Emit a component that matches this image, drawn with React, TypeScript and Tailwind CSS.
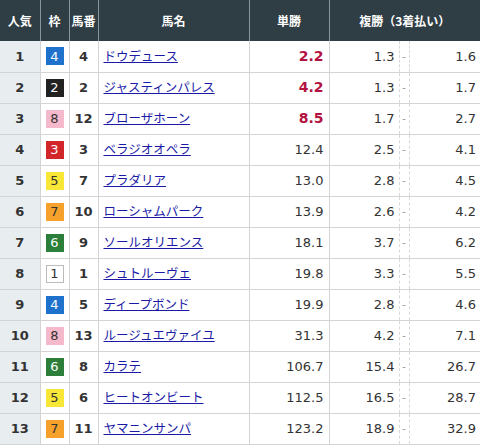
import React from 'react';

type Row = {
  rank: number;
  waku: number;
  num: number;
  name: string;
  win: string;
  placeLo: string;
  placeHi: string;
};

const rows: Row[] = [
  { rank: 1, waku: 4, num: 4, name: 'ドウデュース', win: '2.2', placeLo: '1.3', placeHi: '1.6' },
  { rank: 2, waku: 2, num: 2, name: 'ジャスティンパレス', win: '4.2', placeLo: '1.3', placeHi: '1.7' },
  { rank: 3, waku: 8, num: 12, name: 'ブローザホーン', win: '8.5', placeLo: '1.7', placeHi: '2.7' },
  { rank: 4, waku: 3, num: 3, name: 'ベラジオオペラ', win: '12.4', placeLo: '2.5', placeHi: '4.1' },
  { rank: 5, waku: 5, num: 7, name: 'プラダリア', win: '13.0', placeLo: '2.8', placeHi: '4.5' },
  { rank: 6, waku: 7, num: 10, name: 'ローシャムパーク', win: '13.9', placeLo: '2.6', placeHi: '4.2' },
  { rank: 7, waku: 6, num: 9, name: 'ソールオリエンス', win: '18.1', placeLo: '3.7', placeHi: '6.2' },
  { rank: 8, waku: 1, num: 1, name: 'シュトルーヴェ', win: '19.8', placeLo: '3.3', placeHi: '5.5' },
  { rank: 9, waku: 4, num: 5, name: 'ディープボンド', win: '19.9', placeLo: '2.8', placeHi: '4.6' },
  { rank: 10, waku: 8, num: 13, name: 'ルージュエヴァイユ', win: '31.3', placeLo: '4.2', placeHi: '7.1' },
  { rank: 11, waku: 6, num: 8, name: 'カラテ', win: '106.7', placeLo: '15.4', placeHi: '26.7' },
  { rank: 12, waku: 5, num: 6, name: 'ヒートオンビート', win: '112.5', placeLo: '16.5', placeHi: '28.7' },
  { rank: 13, waku: 7, num: 11, name: 'ヤマニンサンパ', win: '123.2', placeLo: '18.9', placeHi: '32.9' },
];

// frame colours
const wakuStyle: Record<number, string> = {
  1: 'bg-white text-[#333] border border-[#bbb]',
  2: 'bg-[#222] text-white',
  3: 'bg-[#d2262b] text-white',
  4: 'bg-[#1f72cc] text-white',
  5: 'bg-[#f8e737] text-[#333]',
  6: 'bg-[#2b7f3a] text-white',
  7: 'bg-[#f6a12c] text-[#333]',
  8: 'bg-[#f5b9cb] text-[#333]',
};

const num = "font-['Verdana','DejaVu_Sans',sans-serif]";
const jp = "font-['Noto_Sans_CJK_JP','Noto_Sans',sans-serif]";

export default function App() {
  return (
    <div className="w-[480px] h-[446px] bg-white overflow-hidden">
      <table className="w-[480px] table-fixed border-collapse">
        <colgroup>
          <col className="w-[40px]" />
          <col className="w-[29px]" />
          <col className="w-[29px]" />
          <col className="w-[151px]" />
          <col className="w-[80px]" />
          <col className="w-[70px]" />
          <col className="w-[10px]" />
          <col className="w-[71px]" />
        </colgroup>
        <thead>
          <tr className={`h-[41px] bg-[#2f3d45] text-white text-[12px] font-bold ${jp}`}>
            <th className="border-r border-[#8a959b] font-bold">人気</th>
            <th className="border-r border-[#8a959b] font-bold">枠</th>
            <th className="border-r border-[#8a959b] font-bold">馬番</th>
            <th className="border-r border-[#8a959b] font-bold">馬名</th>
            <th className="border-r border-[#8a959b] font-bold">単勝</th>
            <th colSpan={3} className="font-bold">複勝（3着払い）</th>
          </tr>
        </thead>
        <tbody>
          {rows.map((r) => (
            <tr key={r.rank} className="h-[31px] border-b border-[#d4d4d4] text-[13px] text-[#333]">
              <td className={`bg-[#e8edf0] border-r border-[#d4d4d4] text-center font-bold ${num}`}>{r.rank}</td>
              <td className="border-r border-[#d4d4d4]">
                <div className="flex justify-center">
                  <span className={`w-[18px] h-[18px] flex items-center justify-center text-[13px] leading-none ${num} ${wakuStyle[r.waku]}`}>
                    {r.waku}
                  </span>
                </div>
              </td>
              <td className={`border-r border-[#d4d4d4] text-center font-bold ${num}`}>{r.num}</td>
              <td className="border-r border-[#d4d4d4] pl-[5px]">
                <a href="#" className={`text-[12.5px] text-[#1a1aa6] underline ${jp}`}>{r.name}</a>
              </td>
              <td
                className={`border-r border-[#d4d4d4] text-right pr-[5px] ${num} ${
                  r.rank <= 3 ? 'text-[#b3123f] font-bold text-[14px]' : ''
                }`}
              >
                {r.win}
              </td>
              <td className={`text-right pr-[4px] ${num}`}>{r.placeLo}</td>
              <td className={`text-center text-[10px] text-[#999] border-x border-dashed border-[#d8d8d8] ${num}`}>-</td>
              <td className={`text-right pr-[4px] ${num}`}>{r.placeHi}</td>
            </tr>
          ))}
        </tbody>
      </table>
    </div>
  );
}
